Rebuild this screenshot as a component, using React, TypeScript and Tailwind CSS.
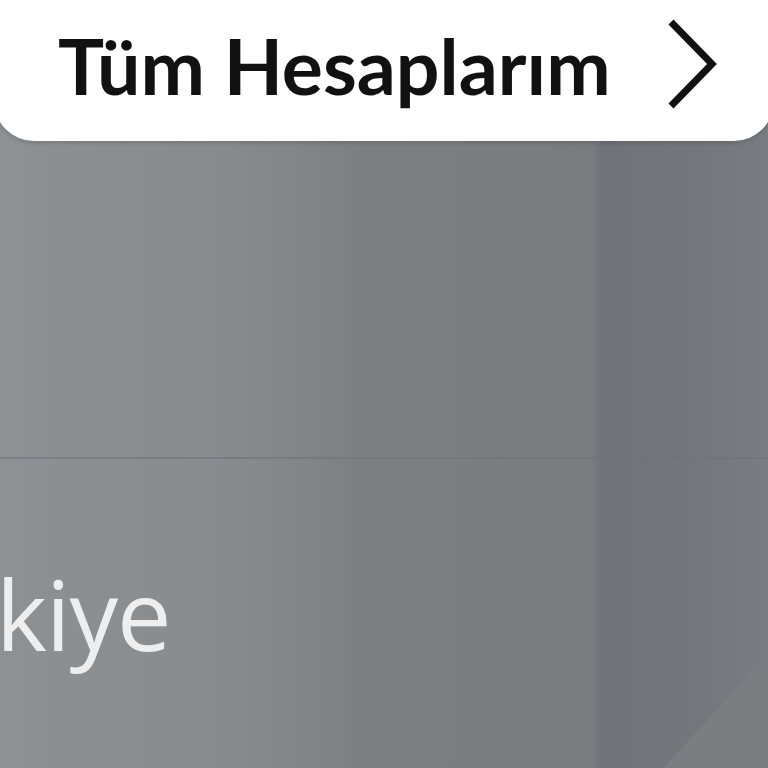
export default function App() {
  return (
    <div
      className="relative h-[768px] w-[768px] overflow-hidden"
      style={{
        background:
          "linear-gradient(to right, #8d9194 0%, #878b8e 30%, #818588 40%, #7b7f82 47%, #797d80 77%, #6f7277 78.5%, #73767a 90%, #797c80 100%)",
      }}
    >
      <svg
        className="pointer-events-none absolute inset-0"
        width="768"
        height="768"
        viewBox="0 0 768 768"
      >
        <polygon points="768,655 768,768 663,768" fill="#7a7e81" />
      </svg>

      <div className="relative flex flex-col">
        <div className="mx-[-6px] flex h-[141px] items-center justify-between rounded-b-[40px] bg-white pl-[64px] pr-[55px] shadow-[0_2px_4px_rgba(0,0,0,0.15)]">
          <h1
            className="pb-[10px] text-[77px] font-bold leading-none text-[#111]"
            style={{ fontFamily: 'Lato, "Open Sans", sans-serif' }}
          >
            Tüm Hesaplarım
          </h1>
          <svg width="52" height="90" viewBox="0 0 52 90" fill="none" className="mb-[14px]">
            <path d="M4 3 L45 45 L4 87" stroke="#111" strokeWidth="7" strokeLinejoin="miter" />
          </svg>
        </div>

        <div className="h-[318px] border-b-2 border-[#6f7376]/60" />

        <div className="pt-[106px]">
          <p
            className="ml-[-4px] text-[97px] font-normal leading-none tracking-[-1px] text-[#eeeeee]"
            style={{ fontFamily: '"Open Sans", "Liberation Sans", sans-serif' }}
          >
            kiye
          </p>
        </div>
      </div>
    </div>
  );
}
